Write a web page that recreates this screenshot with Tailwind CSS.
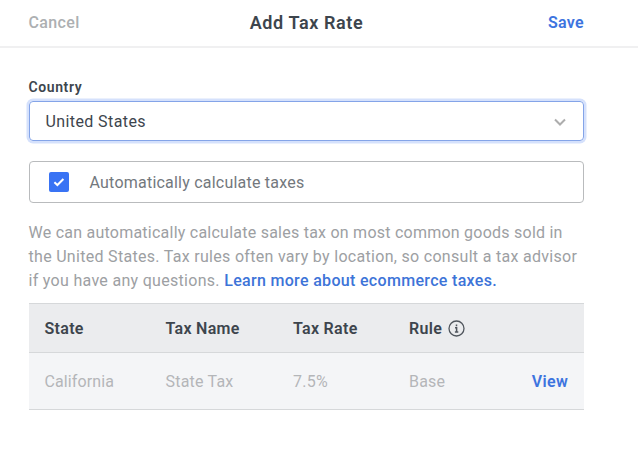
<!DOCTYPE html>
<html lang="en">
<head>
    <meta charset="utf-8">
    <title>Add Tax Rate</title>
    <script src="https://cdn.jsdelivr.net/npm/@tailwindcss/browser@4"></script>
</head>
<body class="bg-white font-['Roboto',sans-serif] text-base text-[#3d454d]">
<header class="grid h-12 grid-cols-[1fr_113px_1fr] items-center border-b-2 border-[#f0f0f1] pr-[54px] pl-[28.5px]">
    <button class="justify-self-start font-medium tracking-[0.35px] text-[#adb0b2]">Cancel</button>
    <h1 class="text-lg font-semibold tracking-[0.6px] whitespace-nowrap">Add Tax Rate</h1>
    <button class="justify-self-end font-semibold tracking-[0.3px] text-[#3d74df]">Save</button>
</header>
<main class="w-[584px] pt-[29px] pl-[28.5px]">
    <label for="country" class="block text-sm leading-5 font-semibold tracking-[0.6px]">Country</label>
    <div id="country" class="mt-1 flex h-10 items-center justify-between rounded-[4px] border border-[#84a4e8] pr-[17px] pl-4 ring-[2.5px] ring-[#d5e1fc]">
        <span class="pt-0.5 tracking-[0.4px]">United States</span>
        <svg class="mt-0.5 h-3 w-3" viewBox="0 0 12 12" fill="none" stroke="#adadad" stroke-width="2"><path d="M1 3.5l5 5 5-5"/></svg>
    </div>
    <label class="mt-5 flex h-[42px] items-center rounded-[4px] border border-[#b9bbbd] pl-5 text-[#73787d]">
        <span class="-ml-px flex h-5 w-5 items-center justify-center rounded-[2px] bg-[#3973f4]">
            <svg class="h-3 w-3" viewBox="0 0 12 12" fill="none" stroke="#fff" stroke-width="2"><path d="M1.4 6.2l3 2.8 6-6"/></svg>
        </span>
        <span class="ml-[21px] pt-0.5 tracking-[0.22px]">Automatically calculate taxes</span>
    </label>
    <p class="mt-[18px] leading-6 tracking-[0.3px] whitespace-nowrap text-[#9da0a3]">
        <span class="tracking-[0.24px]">We can automatically calculate sales tax on most common goods sold in</span><br>
        <span>the United States. Tax rules often vary by location, so consult a tax advisor</span><br>
        <span>if you have any questions.</span> <a href="#" class="font-medium tracking-[0.32px] text-[#3d74d8]">Learn more about ecommerce taxes.</a>
    </p>
    <div class="mt-[10px]">
        <div class="grid h-[50px] grid-cols-[121px_127.5px_116px_1fr] items-center border-y border-[#d6d8da] bg-[#ebecee] pt-0.5 pl-4 font-semibold tracking-[0.3px]">
            <span>State</span>
            <span>Tax Name</span>
            <span>Tax Rate</span>
            <span class="flex items-center gap-1.5">Rule
                <svg class="-mt-0.5 h-[17px] w-[17px]" viewBox="0 0 17 17" fill="none" stroke="#50565d"><circle cx="8.5" cy="8.5" r="7.5" stroke-width="1.3"/><path d="M8.5 4.4v1.8M7 7.7h1.6v4M6.9 11.9h3.4" stroke-width="1.5"/></svg>
            </span>
        </div>
        <div class="grid h-[57px] grid-cols-[121px_127.5px_116px_1fr_auto] items-center border-b border-[#d6d8da] bg-[#f4f5f7] pt-0.5 pr-4 pl-4 tracking-[0.2px] text-[#b4b6b9]">
            <span class="tracking-[0.1px]">California</span>
            <span>State Tax</span>
            <span class="tracking-[0.3px]">7.5%</span>
            <span>Base</span>
            <a href="#" class="font-semibold tracking-[0.3px] text-[#3d74df]">View</a>
        </div>
    </div>
</main>
</body>
</html>
